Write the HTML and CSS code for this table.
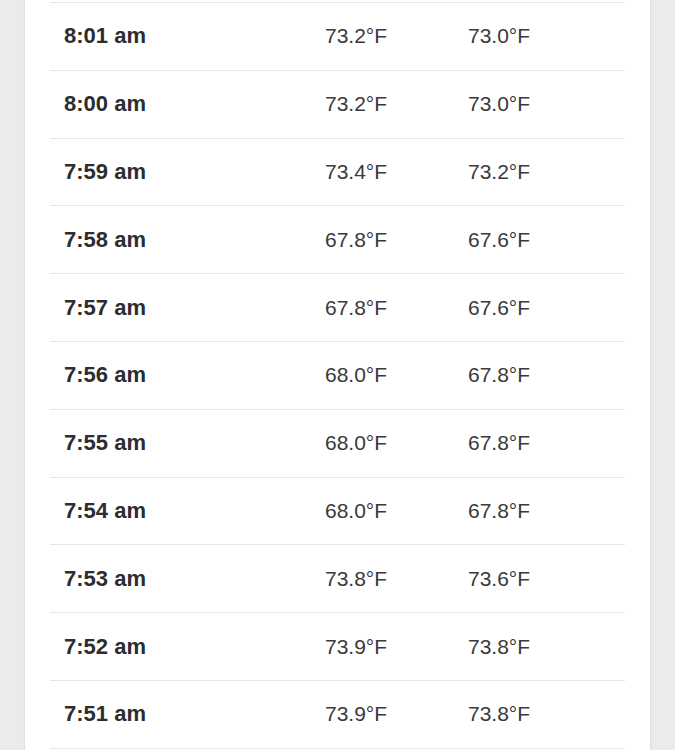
FILE: index.html
```html
<!DOCTYPE html>
<html>
<head>
<meta charset="utf-8">
<link rel="stylesheet" href="styles.css">
</head>
<body>
<div class="page">
  <div class="card">
    <div class="table">
      <div class="row"><div class="time">8:01 am</div><div class="val">73.2°F</div><div class="val">73.0°F</div></div>
      <div class="row"><div class="time">8:00 am</div><div class="val">73.2°F</div><div class="val">73.0°F</div></div>
      <div class="row"><div class="time">7:59 am</div><div class="val">73.4°F</div><div class="val">73.2°F</div></div>
      <div class="row"><div class="time">7:58 am</div><div class="val">67.8°F</div><div class="val">67.6°F</div></div>
      <div class="row"><div class="time">7:57 am</div><div class="val">67.8°F</div><div class="val">67.6°F</div></div>
      <div class="row"><div class="time">7:56 am</div><div class="val">68.0°F</div><div class="val">67.8°F</div></div>
      <div class="row"><div class="time">7:55 am</div><div class="val">68.0°F</div><div class="val">67.8°F</div></div>
      <div class="row"><div class="time">7:54 am</div><div class="val">68.0°F</div><div class="val">67.8°F</div></div>
      <div class="row"><div class="time">7:53 am</div><div class="val">73.8°F</div><div class="val">73.6°F</div></div>
      <div class="row"><div class="time">7:52 am</div><div class="val">73.9°F</div><div class="val">73.8°F</div></div>
      <div class="row"><div class="time">7:51 am</div><div class="val">73.9°F</div><div class="val">73.8°F</div></div>
    </div>
  </div>
</div>
</body>
</html>
```
FILE: styles.css
```css
html, body {
  margin: 0;
  padding: 0;
  background: #ebebed;
  height: 750px;
  overflow: hidden;
}
.page {
  padding: 0 25px;
}
.card {
  background: #ffffff;
  box-shadow: 0 0 2px rgba(0, 0, 0, 0.16);
  padding: 2px 25px 0;
  height: 760px;
}
.table {
  font-family: "Liberation Sans", Arial, sans-serif;
  border-bottom: 1px solid #e6e6e6;
}
.row {
  display: grid;
  grid-template-columns: 275px 143px 1fr;
  align-items: center;
  height: 66.8px;
  border-top: 1px solid #e6e6e6;
}
.time {
  padding-left: 14px;
  font-size: 22px;
  font-weight: 700;
  color: #2d2d2d;
}
.val {
  font-size: 21px;
  color: #3a3a3a;
}
```
